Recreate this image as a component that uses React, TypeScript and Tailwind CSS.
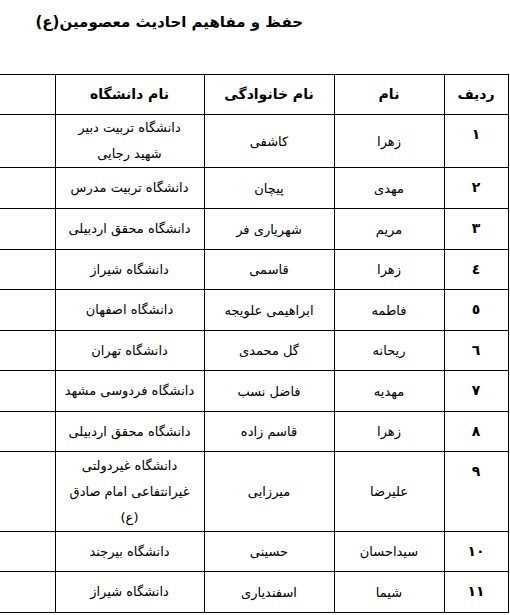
import React from 'react';

type Row = {
    num: string;
    name: string;
    family: string;
    uni: string[];
    h: string;
};

const rows: Row[] = [
    { num: '١', name: 'زهرا', family: 'کاشفی', uni: ['دانشگاه تربیت دبیر', 'شهید رجایی'], h: 'h-[53px]' },
    { num: '٢', name: 'مهدی', family: 'پیچان', uni: ['دانشگاه تربیت مدرس'], h: 'h-[41px]' },
    { num: '٣', name: 'مریم', family: 'شهریاری فر', uni: ['دانشگاه محقق اردبیلی'], h: 'h-[41px]' },
    { num: '٤', name: 'زهرا', family: 'قاسمی', uni: ['دانشگاه شیراز'], h: 'h-[40px]' },
    { num: '٥', name: 'فاطمه', family: 'ابراهیمی علویجه', uni: ['دانشگاه اصفهان'], h: 'h-[41px]' },
    { num: '٦', name: 'ریحانه', family: 'گل محمدی', uni: ['دانشگاه تهران'], h: 'h-[40px]' },
    { num: '٧', name: 'مهدیه', family: 'فاضل نسب', uni: ['دانشگاه فردوسی مشهد'], h: 'h-[41px]' },
    { num: '٨', name: 'زهرا', family: 'قاسم زاده', uni: ['دانشگاه محقق اردبیلی'], h: 'h-[40px]' },
    { num: '٩', name: 'علیرضا', family: 'میرزایی', uni: ['دانشگاه غیردولتی', 'غیرانتفاعی امام صادق', '(ع)'], h: 'h-[80px]' },
    { num: '١٠', name: 'سیداحسان', family: 'حسینی', uni: ['دانشگاه بیرجند'], h: 'h-[40px]' },
    { num: '١١', name: 'شیما', family: 'اسفندیاری', uni: ['دانشگاه شیراز'], h: 'h-[41px]' },
];

export default function App() {
    return (
        <div className="w-[510px] h-[615px] bg-white text-black font-['DejaVu_Sans',sans-serif] overflow-hidden">
            {/* Title */}
            <div dir="rtl" className="pt-[10px] pr-[207px] h-[74px]">
                <h1 className="text-[15px] font-bold leading-[24px] whitespace-nowrap">
                    حفظ و مفاهیم احادیث معصومین(ع)
                </h1>
            </div>

            {/* Table */}
            <table dir="rtl" className="table-fixed border-collapse w-[508px] text-[13px]">
                <colgroup>
                    <col className="w-[64px]" />
                    <col className="w-[110px]" />
                    <col className="w-[130px]" />
                    <col className="w-[149px]" />
                    <col className="w-[55px]" />
                </colgroup>
                <thead>
                    <tr className="h-[40px]">
                        <th className="border border-black p-0 text-[14px] font-bold text-center">ردیف</th>
                        <th className="border border-black p-0 text-[14px] font-bold text-center">نام</th>
                        <th className="border border-black p-0 text-[14px] font-bold text-center">نام خانوادگی</th>
                        <th className="border border-black p-0 text-[14px] font-bold text-center">نام دانشگاه</th>
                        <th className="border border-black border-l-0 p-0"></th>
                    </tr>
                </thead>
                <tbody>
                    {rows.map((row) => (
                        <tr key={row.num} className={row.h}>
                            <td className="border border-black p-0 pt-[7px] align-top text-center text-[14px] font-bold leading-[25px]">
                                {row.num}
                            </td>
                            <td className="border border-black p-0 text-center leading-[25px]">{row.name}</td>
                            <td className="border border-black p-0 text-center leading-[25px]">{row.family}</td>
                            <td className="border border-black p-0 text-center leading-[26px]">
                                {row.uni.map((line) => (
                                    <div key={line}>{line}</div>
                                ))}
                            </td>
                            <td className="border border-black border-l-0 p-0"></td>
                        </tr>
                    ))}
                </tbody>
            </table>
        </div>
    );
}
